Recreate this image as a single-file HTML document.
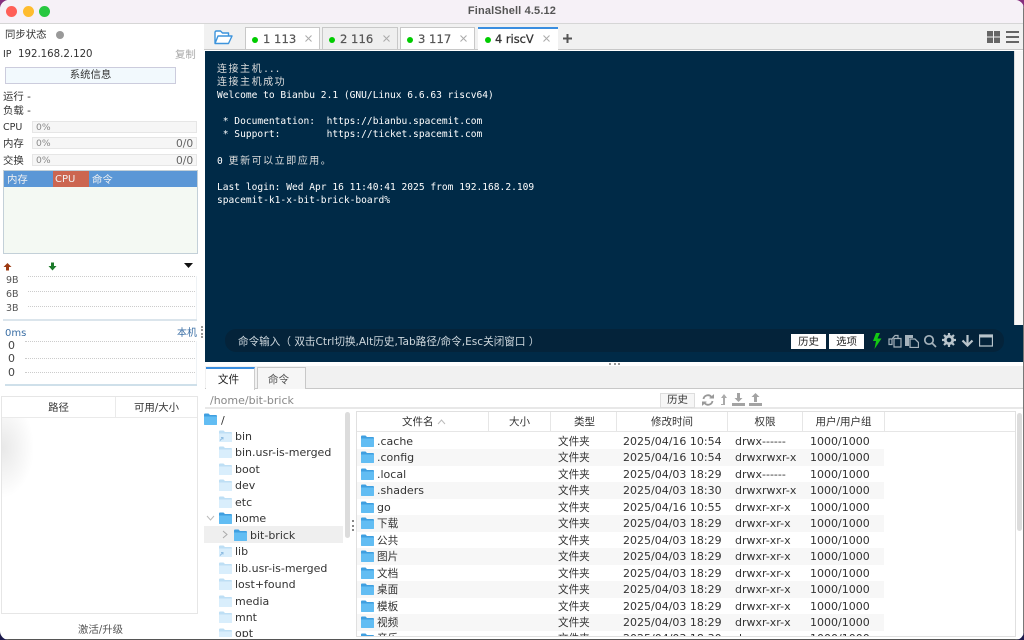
<!DOCTYPE html>
<html lang="zh"><head><meta charset="utf-8"><title>FinalShell 4.5.12</title>
<style>
html,body{margin:0;padding:0;width:1024px;height:640px;overflow:hidden;background:linear-gradient(180deg,#86307e 0,#86307e 50%,#1c1a4c 51%,#1c1a4c 100%)}
*{box-sizing:border-box}
#w{position:absolute;left:0;top:0;width:1024px;height:640px;background:#fff;overflow:hidden;font-family:"DejaVu Sans","Noto Sans CJK SC",sans-serif;font-size:11px;color:#333;border-radius:9px}
#w div,#w svg{position:absolute}
.t{line-height:16px;height:16px;white-space:pre;padding-top:1px}
.c{text-align:center}
.k{font-size:10.6px}
.p{font-size:10.4px}
.m{font-family:"DejaVu Sans Mono","Noto Sans CJK SC",monospace;font-size:9.58px;color:#fff;line-height:13px;height:13px;white-space:pre;left:217px}
.m span{font-size:10px;letter-spacing:1.53px;color:#ddd}
.tab{top:27px;height:22px;background:#fff;border:1px solid #c8c8c8;border-bottom:none}
.dot{width:6px;height:6px;border-radius:50%;background:#0c0;top:37px}
.t.tl{top:31px;font-size:11.6px;color:#555;padding-top:0;-webkit-text-stroke:.2px #555}
.b{background:#f6f6f6;border:1px solid #e6e6e6;height:12px;left:32px;width:165px}
.z{left:357px;width:527px;height:16.5px;background:#f7f7f7}
.hd{width:1px;height:19px;top:412px;background:#e6e6e6}
.dl{height:1px;border-top:1px dotted #ccc}
.sm{font-size:9.2px;color:#888}
.x path{stroke:#aaa}
</style></head><body><div id="w">
<svg width="0" height="0" style="position:absolute"><defs>
<symbol id="fo" viewBox="0 0 13 12"><path d="M0 1.500Q0 .5 1 .5H4.500L6 2H12Q13 2 13 3V11Q13 12 12 12H1Q0 12 0 11Z" fill="#3f9fe0"/><path d="M0 3.500H13V11Q13 12 12 12H1Q0 12 0 11Z" fill="#62bdf3"/></symbol>
<symbol id="fp" viewBox="0 0 13 12"><path d="M0 1.500Q0 .5 1 .5H4.500L6 2H12Q13 2 13 3V11Q13 12 12 12H1Q0 12 0 11Z" fill="#bedff5"/><path d="M0 3.500H13V11Q13 12 12 12H1Q0 12 0 11Z" fill="#d9eefc"/></symbol>
<symbol id="fl" viewBox="0 0 13 12"><path d="M0 1.500Q0 .5 1 .5H4.500L6 2H12Q13 2 13 3V11Q13 12 12 12H1Q0 12 0 11Z" fill="#bedff5"/><path d="M0 3.500H13V11Q13 12 12 12H1Q0 12 0 11Z" fill="#d9eefc"/><path d="M1 10.500L3.500 8M2 7.500H4V9.500" fill="none" stroke="#8fbde2" stroke-width="1"/></symbol>
</defs></svg>

<!-- title bar -->
<div style="left:0;top:0;width:1024px;height:24px;background:#f6f1f7;border-bottom:1px solid #d6d6d6"></div>
<div style="left:6px;top:6px;width:11px;height:11px;border-radius:50%;background:#ff5f57"></div>
<div style="left:23px;top:6px;width:11px;height:11px;border-radius:50%;background:#febc2e"></div>
<div style="left:39px;top:6px;width:11px;height:11px;border-radius:50%;background:#28c840"></div>
<div class="t c" style="left:412px;top:3px;width:200px;padding-top:0;font-family:'Liberation Sans',sans-serif;font-weight:700;color:#555;letter-spacing:.15px">FinalShell 4.5.12</div>

<!-- left panel -->
<div class="t p" style="left:5px;top:26px">同步状态</div>
<div style="left:56px;top:31px;width:8px;height:8px;border-radius:50%;background:#999"></div>
<div class="t" style="left:3px;top:46px;font-size:9.500px">IP</div>
<div class="t" style="left:18px;top:46px;font-size:10.200px">192.168.2.120</div>
<div class="t p" style="left:175px;top:46px;color:#aaa">复制</div>
<div class="t c p" style="left:5px;top:67px;width:171px;height:17px;background:#f2f9fd;border:1px solid #ccd;line-height:15px;padding-top:0">系统信息</div>
<div class="t p" style="left:3px;top:88px">运行 -</div>
<div class="t p" style="left:3px;top:102px">负载 -</div>
<div class="t" style="left:3px;top:119px;font-size:9.500px">CPU</div>
<div class="t p" style="left:3px;top:135px">内存</div>
<div class="t p" style="left:3px;top:152px">交换</div>
<div class="b" style="top:121px"></div><div class="b" style="top:137px"></div><div class="b" style="top:154px"></div>
<div class="t sm" style="left:36px;top:119px">0%</div>
<div class="t sm" style="left:36px;top:135px">0%</div>
<div class="t sm" style="left:36px;top:152px">0%</div>
<div class="t" style="left:176px;top:135px;color:#666;font-size:10.700px">0/0</div>
<div class="t" style="left:176px;top:152px;color:#666;font-size:10.700px">0/0</div>

<div style="left:3px;top:170px;width:195px;height:84px;background:#f4f9f3;border:1px solid #c3d0d8"></div>
<div style="left:4px;top:171px;width:193px;height:16px;background:#5b97d6"></div>
<div style="left:53px;top:171px;width:36px;height:16px;background:#cc6650"></div>
<div class="t p" style="left:7px;top:171px;color:#f2f2f2">内存</div>
<div class="t" style="left:55px;top:171px;color:#f2f2f2;font-size:10px">CPU</div>
<div class="t p" style="left:92px;top:171px;color:#f2f2f2">命令</div>

<svg style="left:3px;top:262px" width="9" height="9" viewBox="0 0 9 9"><path d="M4.500 1L8.500 5H6V8.500H3V5H.5Z" fill="#9c3a12"/></svg>
<svg style="left:48px;top:262px" width="9" height="9" viewBox="0 0 9 9"><path d="M3 .5H6V4H8.500L4.500 8.500L.5 4H3Z" fill="#1c7a2a"/></svg>
<svg style="left:184px;top:263px" width="9" height="6" viewBox="0 0 9 6"><path d="M0 0H9L4.500 5Z" fill="#111"/></svg>
<div class="t" style="left:6px;top:272px;color:#555;font-size:9.500px">9B</div>
<div class="t" style="left:6px;top:286px;color:#555;font-size:9.500px">6B</div>
<div class="t" style="left:6px;top:300px;color:#555;font-size:9.500px">3B</div>
<div class="dl" style="left:28px;top:276px;width:169px"></div>
<div class="dl" style="left:28px;top:291px;width:169px"></div>
<div class="dl" style="left:28px;top:306px;width:169px"></div>
<div style="left:196px;top:276px;width:1px;height:44px;background:#eef2f5"></div>
<div style="left:3px;top:319px;width:194px;height:2px;background:#dbe5ec"></div>
<div class="t" style="left:5px;top:325px;color:#3b6fa5;font-size:10px">0ms</div>
<div class="t" style="left:177px;top:325px;color:#3b6fa5;font-size:10px">本机</div>
<div style="left:201px;top:326px;width:2px;height:12px;border-left:2px dotted #999"></div>
<div class="t" style="left:8px;top:337px;color:#444">0</div>
<div class="t" style="left:8px;top:350px;color:#444">0</div>
<div class="t" style="left:8px;top:364px;color:#444">0</div>
<div class="dl" style="left:25px;top:341px;width:172px"></div>
<div class="dl" style="left:25px;top:358px;width:172px"></div>
<div class="dl" style="left:25px;top:372px;width:172px"></div>
<div style="left:196px;top:341px;width:1px;height:44px;background:#eef2f5"></div>
<div style="left:5px;top:384px;width:192px;height:2px;background:#cfe0ea"></div>

<div style="left:1px;top:396px;width:197px;height:218px;border:1px solid #e6e6e6;background:#fff"></div>
<div style="left:2px;top:417px;width:195px;height:1px;background:#eaeaea"></div>
<div style="left:115px;top:397px;width:1px;height:20px;background:#eaeaea"></div>
<div class="t c p" style="left:2px;top:399px;width:113px">路径</div>
<div class="t c p" style="left:116px;top:399px;width:81px">可用/大小</div>
<div style="left:2px;top:418px;width:32px;height:100px;background:radial-gradient(ellipse 32px 50px at 0 30px,#e8e8e8,rgba(255,255,255,0))"></div>
<div class="t c p" style="left:2px;top:621px;width:197px;color:#555">激活/升级</div>

<!-- tab strip -->
<div style="left:204px;top:24px;width:820px;height:26px;background:#f1f1f1;border-bottom:1px solid #c8c8c8"></div>
<svg style="left:214px;top:30px" width="19" height="15" viewBox="0 0 19 15"><path d="M1 13V2.500Q1 1 2.500 1H6.500L8.500 3H14.500V5.500M1 13.500L4 6H18L14.500 13.500Z" fill="#fff" stroke="#3d94dc" stroke-width="1.400" stroke-linejoin="round"/></svg>
<div class="tab" style="left:245px;width:75px"></div>
<div class="tab" style="left:322px;width:76px;background:#efefef"></div>
<div class="tab" style="left:400px;width:75px"></div>
<div class="tab" style="left:478px;width:80px;height:23px;border-top:2px solid #3a8ee0;border-left:none;border-right:none"></div>
<div class="dot" style="left:252px"></div><div class="dot" style="left:329px"></div><div class="dot" style="left:407px"></div><div class="dot" style="left:485px"></div>
<div class="t tl" style="left:263px">1 113</div>
<div class="t tl" style="left:340px">2 116</div>
<div class="t tl" style="left:418px">3 117</div>
<div class="t tl" style="left:495px;font-size:11.400px;color:#333;-webkit-text-stroke:.25px #333">4 riscV</div>
<svg class="x" style="left:305px;top:35px" width="7" height="7" viewBox="0 0 7 7"><path d="M.5.5L6.500 6.500M6.500.5L.5 6.500"/></svg>
<svg class="x" style="left:383px;top:35px" width="7" height="7" viewBox="0 0 7 7"><path d="M.5.5L6.500 6.500M6.500.5L.5 6.500"/></svg>
<svg class="x" style="left:460px;top:35px" width="7" height="7" viewBox="0 0 7 7"><path d="M.5.5L6.500 6.500M6.500.5L.5 6.500"/></svg>
<svg class="x" style="left:543px;top:35px" width="7" height="7" viewBox="0 0 7 7"><path d="M.5.5L6.500 6.500M6.500.5L.5 6.500"/></svg>
<svg style="left:563px;top:34px" width="9" height="9" viewBox="0 0 9 9"><path d="M4.500 0V9M0 4.500H9" stroke="#555" stroke-width="2"/></svg>
<svg style="left:987px;top:31px" width="13" height="12" viewBox="0 0 13 12"><path d="M0 0H6V5.500H0ZM7 0H13V5.500H7ZM0 6.500H6V12H0ZM7 6.500H13V12H7Z" fill="#666"/></svg>
<svg style="left:1006px;top:31px" width="13" height="12" viewBox="0 0 13 12"><path d="M0 0H13V2H0ZM0 5H13V7H0ZM0 10H13V12H0Z" fill="#666"/></svg>

<!-- terminal -->
<div style="left:205px;top:51px;width:809px;height:311px;background:#002a47"></div>
<div style="left:1014px;top:51px;width:10px;height:274px;background:#f8f8f8;border-left:1px solid #ddd"></div>
<div style="left:1014px;top:325px;width:10px;height:37px;background:#002a47"></div>
<div class="m" style="top:63px;color:#ddd"><span>连接主机</span>...</div>
<div class="m" style="top:76px"><span>连接主机成功</span></div>
<div class="m" style="top:89px">Welcome to Bianbu 2.1 (GNU/Linux 6.6.63 riscv64)</div>
<div class="m" style="top:115px"> * Documentation:  https://bianbu.spacemit.com</div>
<div class="m" style="top:128px"> * Support:        https://ticket.spacemit.com</div>
<div class="m" style="top:155px">0 <span>更新可以立即应用。</span></div>
<div class="m" style="top:181px">Last login: Wed Apr 16 11:40:41 2025 from 192.168.2.109</div>
<div class="m" style="top:194px">spacemit-k1-x-bit-brick-board%</div>

<div style="left:225px;top:329px;width:779px;height:23px;border-radius:11px;background:#04233a"></div>
<div class="t" style="left:238px;top:333px;color:#cdd6dc;font-size:10.600px">命令输入（ 双击Ctrl切换,Alt历史,Tab路径/命令,Esc关闭窗口 ）</div>
<div class="t c p" style="left:791px;top:334px;width:35px;height:15px;background:#fff;color:#222;line-height:15px">历史</div>
<div class="t c p" style="left:829px;top:334px;width:35px;height:15px;background:#fff;color:#222;line-height:15px">选项</div>
<svg style="left:872px;top:333px" width="10" height="16" viewBox="0 0 10 16"><path d="M4 0L1 8H4L2.500 16L9.500 5.500H5.500L8 0Z" fill="#14c814"/></svg>
<svg style="left:888px;top:334px" width="14" height="14" viewBox="0 0 14 14" fill="none" stroke="#a5b2bb" stroke-width="1.200"><path d="M4 5L7 1.500H10V4M4 5V10.500H1V5ZM6 4.500H13V13H6Z"/></svg>
<svg style="left:905px;top:334px" width="14" height="14" viewBox="0 0 14 14"><path d="M0 1H8V4H4V12H0Z" fill="#a5b2bb"/><path d="M5 5H10L13.500 8.500V13.500H5Z" fill="none" stroke="#a5b2bb" stroke-width="1.300"/></svg>
<svg style="left:923px;top:334px" width="14" height="14" viewBox="0 0 14 14" fill="none" stroke="#a5b2bb" stroke-width="1.700"><circle cx="6" cy="6" r="4.200"/><path d="M9 9L13 13"/></svg>
<svg style="left:942px;top:333px" width="14" height="14" viewBox="0 0 14 14"><circle cx="7" cy="7" r="3.700" fill="none" stroke="#b9c4cb" stroke-width="2.800"/><path d="M7 0V3M7 11V14M0 7H3M11 7H14M2 2L4 4M10 10L12 12M12 2L10 4M4 10L2 12" stroke="#b9c4cb" stroke-width="2.200"/></svg>
<svg style="left:961px;top:334px" width="13" height="13" viewBox="0 0 13 13"><path d="M6.500 1V11M1.500 6.500L6.500 11.500L11.500 6.500" fill="none" stroke="#b9c4cb" stroke-width="2.200"/></svg>
<svg style="left:979px;top:334px" width="14" height="13" viewBox="0 0 14 13"><path d="M.5 1H13.500V12H.5Z" fill="none" stroke="#b9c4cb" stroke-width="1.300"/><path d="M0 1H14V3.500H0Z" fill="#b9c4cb"/></svg>

<!-- splitter -->
<div style="left:205px;top:362px;width:819px;height:4px;background:#fff"></div>
<div style="left:609px;top:363px;width:11px;height:2px;border-top:2px dotted #999"></div>

<!-- bottom tabs -->
<div style="left:205px;top:366px;width:819px;height:23px;background:#f1f1f1;border-bottom:1px solid #c8c8c8"></div>
<div class="tab" style="left:206px;top:367px;width:49px;height:23px;border-top:2px solid #3a8ee0;border-left:none;border-right:1px solid #ccc"></div>
<div class="tab" style="left:257px;top:367px;width:49px;height:22px;background:#f6f6f6"></div>
<div class="t c k" style="left:204px;top:371px;width:49px;color:#222">文件</div>
<div class="t c k" style="left:254px;top:371px;width:49px;color:#555">命令</div>

<!-- path row -->
<div class="t" style="left:210px;top:392px;color:#888">/home/bit-brick</div>
<div style="left:205px;top:407px;width:819px;height:2px;background:#e8e8e8"></div>
<div class="t c p" style="left:660px;top:393px;width:35px;height:15px;background:#f6f6f6;border:1px solid #ddd;line-height:13px;padding-top:0">历史</div>
<svg style="left:702px;top:394px" width="12" height="12" viewBox="0 0 12 12" fill="none" stroke="#999" stroke-width="1.800"><path d="M1.500 5A4.500 4.500 0 0 1 9.500 3M10.500 7A4.500 4.500 0 0 1 2.500 9"/><path d="M7.500 4H11.500V0.500M4.500 8H.5V11.500" stroke-width="1" fill="#999"/></svg>
<svg style="left:720px;top:394px" width="8" height="12" viewBox="0 0 8 12"><path d="M4 0L7 4H5V11H1V10H3V4H1Z" fill="#aaa"/></svg>
<svg style="left:732px;top:393px" width="13" height="13" viewBox="0 0 13 13"><path d="M5 0H8V5H10.500L6.500 9L2.500 5H5ZM0 10H13V13H0Z" fill="#a3a3a3"/></svg>
<svg style="left:749px;top:393px" width="13" height="13" viewBox="0 0 13 13"><path d="M6.500 0L10.500 4H8V9H5V4H2.500ZM0 10H13V13H0Z" fill="#a3a3a3"/></svg>

<!-- tree -->
<div style="left:204px;top:526px;width:139px;height:17px;background:#efefef"></div>
<div style="left:345px;top:412px;width:5px;height:126px;background:#dcdcdc;border-radius:3px"></div>
<div style="left:352px;top:520px;width:2px;height:11px;border-left:2px dotted #888"></div>
<svg style="left:204px;top:413px" width="13" height="12"><use href="#fo"/></svg>
<div class="t" style="left:221px;top:412px">/</div>
<svg style="left:219px;top:430px" width="13" height="12"><use href="#fl"/></svg><div class="t" style="left:235px;top:428px">bin</div>
<svg style="left:219px;top:446px" width="13" height="12"><use href="#fp"/></svg><div class="t" style="left:235px;top:444px">bin.usr-is-merged</div>
<svg style="left:219px;top:463px" width="13" height="12"><use href="#fp"/></svg><div class="t" style="left:235px;top:461px">boot</div>
<svg style="left:219px;top:479px" width="13" height="12"><use href="#fp"/></svg><div class="t" style="left:235px;top:477px">dev</div>
<svg style="left:219px;top:496px" width="13" height="12"><use href="#fp"/></svg><div class="t" style="left:235px;top:494px">etc</div>
<svg style="left:206px;top:515px" width="9" height="6" viewBox="0 0 9 6"><path d="M1 1L4.500 5L8 1" fill="none" stroke="#bbb"/></svg>
<svg style="left:219px;top:512px" width="13" height="12"><use href="#fo"/></svg><div class="t" style="left:235px;top:510px">home</div>
<svg style="left:222px;top:530px" width="6" height="9" viewBox="0 0 6 9"><path d="M1 1L5 4.500L1 8" fill="none" stroke="#aaa"/></svg>
<svg style="left:234px;top:529px" width="13" height="12"><use href="#fo"/></svg><div class="t" style="left:250px;top:527px">bit-brick</div>
<svg style="left:219px;top:545px" width="13" height="12"><use href="#fl"/></svg><div class="t" style="left:235px;top:543px">lib</div>
<svg style="left:219px;top:562px" width="13" height="12"><use href="#fp"/></svg><div class="t" style="left:235px;top:560px">lib.usr-is-merged</div>
<svg style="left:219px;top:578px" width="13" height="12"><use href="#fp"/></svg><div class="t" style="left:235px;top:576px">lost+found</div>
<svg style="left:219px;top:595px" width="13" height="12"><use href="#fp"/></svg><div class="t" style="left:235px;top:593px">media</div>
<svg style="left:219px;top:611px" width="13" height="12"><use href="#fp"/></svg><div class="t" style="left:235px;top:609px">mnt</div>
<svg style="left:219px;top:628px" width="13" height="12"><use href="#fp"/></svg><div class="t" style="left:235px;top:625px">opt</div>

<!-- file table -->
<div style="left:356px;top:411px;width:660px;height:228px;border:1px solid #e0e0e0;border-bottom:none;background:#fff"></div>
<div style="left:357px;top:431px;width:658px;height:1px;background:#e6e6e6"></div>
<div class="hd" style="left:488px"></div><div class="hd" style="left:550px"></div><div class="hd" style="left:616px"></div><div class="hd" style="left:727px"></div><div class="hd" style="left:802px"></div><div class="hd" style="left:884px"></div>
<div class="t" style="left:402px;top:413px;font-size:10.500px">文件名</div>
<svg style="left:437px;top:419px" width="9" height="6" viewBox="0 0 9 6"><path d="M1 5L4.500 1L8 5" fill="none" stroke="#bbb"/></svg>
<div class="t c" style="left:489px;top:413px;width:61px;font-size:10.500px">大小</div>
<div class="t c" style="left:552px;top:413px;width:65px;font-size:10.500px">类型</div>
<div class="t c" style="left:617px;top:413px;width:110px;font-size:10.500px">修改时间</div>
<div class="t c" style="left:728px;top:413px;width:74px;font-size:10.500px">权限</div>
<div class="t c" style="left:803px;top:413px;width:81px;font-size:10.500px">用户/用户组</div>
<div style="left:1017px;top:413px;width:5px;height:118px;background:#dcdcdc;border-radius:3px"></div>
<div class="z" style="top:449px"></div><div class="z" style="top:482px"></div><div class="z" style="top:515px"></div><div class="z" style="top:548px"></div><div class="z" style="top:581px"></div><div class="z" style="top:614px"></div>

<svg style="left:361px;top:435px" width="13" height="12"><use href="#fo"/></svg><div class="t" style="left:377px;top:433px">.cache</div><div class="t k" style="left:558px;top:433px">文件夹</div><div class="t" style="left:623px;top:433px">2025/04/16 10:54</div><div class="t" style="left:735px;top:433px">drwx------</div><div class="t" style="left:810px;top:433px">1000/1000</div>
<svg style="left:361px;top:451px" width="13" height="12"><use href="#fo"/></svg><div class="t" style="left:377px;top:449px">.config</div><div class="t k" style="left:558px;top:449px">文件夹</div><div class="t" style="left:623px;top:449px">2025/04/16 10:54</div><div class="t" style="left:735px;top:449px">drwxrwxr-x</div><div class="t" style="left:810px;top:449px">1000/1000</div>
<svg style="left:361px;top:468px" width="13" height="12"><use href="#fo"/></svg><div class="t" style="left:377px;top:466px">.local</div><div class="t k" style="left:558px;top:466px">文件夹</div><div class="t" style="left:623px;top:466px">2025/04/03 18:29</div><div class="t" style="left:735px;top:466px">drwx------</div><div class="t" style="left:810px;top:466px">1000/1000</div>
<svg style="left:361px;top:484px" width="13" height="12"><use href="#fo"/></svg><div class="t" style="left:377px;top:482px">.shaders</div><div class="t k" style="left:558px;top:482px">文件夹</div><div class="t" style="left:623px;top:482px">2025/04/03 18:30</div><div class="t" style="left:735px;top:482px">drwxrwxr-x</div><div class="t" style="left:810px;top:482px">1000/1000</div>
<svg style="left:361px;top:501px" width="13" height="12"><use href="#fo"/></svg><div class="t" style="left:377px;top:499px">go</div><div class="t k" style="left:558px;top:499px">文件夹</div><div class="t" style="left:623px;top:499px">2025/04/16 10:55</div><div class="t" style="left:735px;top:499px">drwxr-xr-x</div><div class="t" style="left:810px;top:499px">1000/1000</div>
<svg style="left:361px;top:517px" width="13" height="12"><use href="#fo"/></svg><div class="t k" style="left:377px;top:515px">下载</div><div class="t k" style="left:558px;top:515px">文件夹</div><div class="t" style="left:623px;top:515px">2025/04/03 18:29</div><div class="t" style="left:735px;top:515px">drwxr-xr-x</div><div class="t" style="left:810px;top:515px">1000/1000</div>
<svg style="left:361px;top:534px" width="13" height="12"><use href="#fo"/></svg><div class="t k" style="left:377px;top:532px">公共</div><div class="t k" style="left:558px;top:532px">文件夹</div><div class="t" style="left:623px;top:532px">2025/04/03 18:29</div><div class="t" style="left:735px;top:532px">drwxr-xr-x</div><div class="t" style="left:810px;top:532px">1000/1000</div>
<svg style="left:361px;top:550px" width="13" height="12"><use href="#fo"/></svg><div class="t k" style="left:377px;top:548px">图片</div><div class="t k" style="left:558px;top:548px">文件夹</div><div class="t" style="left:623px;top:548px">2025/04/03 18:29</div><div class="t" style="left:735px;top:548px">drwxr-xr-x</div><div class="t" style="left:810px;top:548px">1000/1000</div>
<svg style="left:361px;top:567px" width="13" height="12"><use href="#fo"/></svg><div class="t k" style="left:377px;top:565px">文档</div><div class="t k" style="left:558px;top:565px">文件夹</div><div class="t" style="left:623px;top:565px">2025/04/03 18:29</div><div class="t" style="left:735px;top:565px">drwxr-xr-x</div><div class="t" style="left:810px;top:565px">1000/1000</div>
<svg style="left:361px;top:583px" width="13" height="12"><use href="#fo"/></svg><div class="t k" style="left:377px;top:581px">桌面</div><div class="t k" style="left:558px;top:581px">文件夹</div><div class="t" style="left:623px;top:581px">2025/04/03 18:29</div><div class="t" style="left:735px;top:581px">drwxr-xr-x</div><div class="t" style="left:810px;top:581px">1000/1000</div>
<svg style="left:361px;top:600px" width="13" height="12"><use href="#fo"/></svg><div class="t k" style="left:377px;top:598px">模板</div><div class="t k" style="left:558px;top:598px">文件夹</div><div class="t" style="left:623px;top:598px">2025/04/03 18:29</div><div class="t" style="left:735px;top:598px">drwxr-xr-x</div><div class="t" style="left:810px;top:598px">1000/1000</div>
<svg style="left:361px;top:616px" width="13" height="12"><use href="#fo"/></svg><div class="t k" style="left:377px;top:614px">视频</div><div class="t k" style="left:558px;top:614px">文件夹</div><div class="t" style="left:623px;top:614px">2025/04/03 18:29</div><div class="t" style="left:735px;top:614px">drwxr-xr-x</div><div class="t" style="left:810px;top:614px">1000/1000</div>
<svg style="left:361px;top:633px" width="13" height="12"><use href="#fo"/></svg><div class="t k" style="left:377px;top:630px">音乐</div><div class="t k" style="left:558px;top:630px">文件夹</div><div class="t" style="left:623px;top:630px">2025/04/03 18:30</div><div class="t" style="left:735px;top:630px">drwxr-xr-x</div><div class="t" style="left:810px;top:630px">1000/1000</div>

<!-- clipping and window edges -->
<div style="left:204px;top:637px;width:820px;height:2px;background:#fff"></div>
<div style="left:356px;top:636px;width:660px;height:1px;background:#e0e0e0"></div>
<div style="left:0;top:639px;width:1024px;height:1px;background:#555"></div>
<div style="left:1023px;top:0;width:1px;height:640px;background:#777"></div>
</div></body></html>
